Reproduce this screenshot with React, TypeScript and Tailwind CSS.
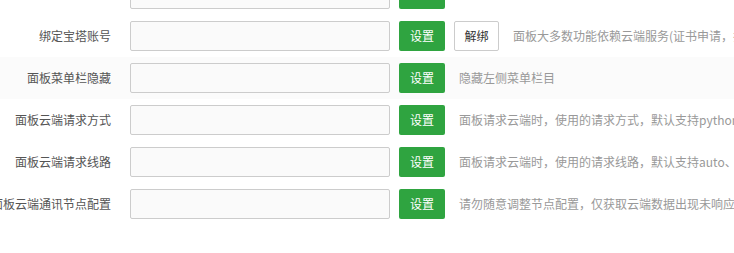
import React from "react";

type Row = {
  label: string;
  desc: string;
  btn: string;
  unbind?: boolean;
  hover?: boolean;
};

const rows: Row[] = [
  { label: "", desc: "", btn: "" },
  {
    label: "绑定宝塔账号",
    desc: "面板大多数功能依赖云端服务(证书申请，插件安装等)，请绑定宝塔账号",
    btn: "设置",
    unbind: true,
  },
  { label: "面板菜单栏隐藏", desc: "隐藏左侧菜单栏目", btn: "设置", hover: true },
  {
    label: "面板云端请求方式",
    desc: "面板请求云端时，使用的请求方式，默认支持python、curl、php",
    btn: "设置",
  },
  {
    label: "面板云端请求线路",
    desc: "面板请求云端时，使用的请求线路，默认支持auto、IPv4、IPv6",
    btn: "设置",
  },
  {
    label: "面板云端通讯节点配置",
    desc: "请勿随意调整节点配置，仅获取云端数据出现未响应时使用",
    btn: "设置",
  },
];

export default function App() {
  return (
    <div
      className="w-[734px] h-[253px] overflow-hidden bg-white text-[12px]"
      style={{ fontFamily: '"Microsoft YaHei", "Noto Sans CJK SC", sans-serif' }}
    >
      <div className="mt-[-27px] flex flex-col">
        {rows.map((r, i) => (
          <div
            key={i}
            className={`flex h-[42px] items-center ${r.hover ? "bg-[#fbfbfb]" : ""}`}
          >
            <div className="flex w-[111px] shrink-0 justify-end whitespace-nowrap text-[#555]">
              {r.label}
            </div>
            <div className="ml-[19px] h-[30px] w-[260px] shrink-0 rounded-[2px] border border-[#cccccc] bg-[#fafafa]" />
            <button className="ml-[9px] h-[30px] w-[46px] shrink-0 rounded-[2px] bg-[#2fa440] text-white">
              {r.btn}
            </button>
            {r.unbind && (
              <button className="ml-[9px] h-[30px] w-[45px] shrink-0 rounded-[2px] border border-[#cccccc] bg-white text-[#333]">
                解绑
              </button>
            )}
            <div className="ml-[14px] whitespace-nowrap text-[#999]">{r.desc}</div>
          </div>
        ))}
      </div>
    </div>
  );
}
